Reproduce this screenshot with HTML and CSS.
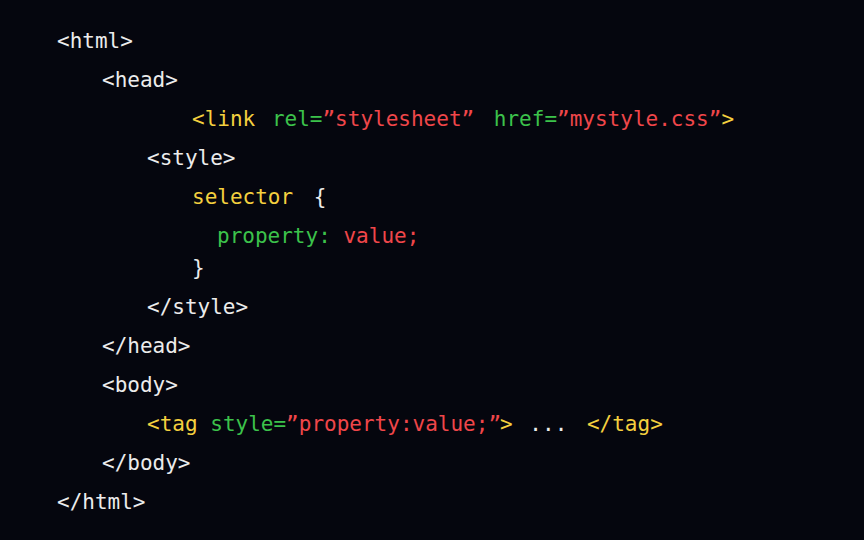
FILE: index.html
```html
<!DOCTYPE html>
<html>
<head>
<meta charset="utf-8">
<link rel="stylesheet" href="styles.css">
</head>
<body>
<div class="code">
  <div class="line"><span class="w">&lt;html&gt;</span></div>
  <div class="line i1"><span class="w">&lt;head&gt;</span></div>
  <div class="line i3"><span class="y">&lt;link</span> <span class="g sp4">rel=</span><span class="r">”stylesheet”</span> <span class="g sp7">href=</span><span class="r">”mystyle.css”</span><span class="y">&gt;</span></div>
  <div class="line i2"><span class="w">&lt;style&gt;</span></div>
  <div class="line i3"><span class="y">selector</span> <span class="w brace sp8">{</span></div>
  <div class="line i3p"><span class="g">property:</span> <span class="r">value;</span></div>
  <div class="line i3 close"><span class="w brace">}</span></div>
  <div class="line i2"><span class="w">&lt;/style&gt;</span></div>
  <div class="line i1"><span class="w">&lt;/head&gt;</span></div>
  <div class="line i1"><span class="w">&lt;body&gt;</span></div>
  <div class="line i2"><span class="y">&lt;tag</span> <span class="g">style=</span><span class="r">”property:value;”</span><span class="y nm2">&gt;</span> <span class="w sp4">...</span> <span class="y sp7">&lt;/tag&gt;</span></div>
  <div class="line i1"><span class="w">&lt;/body&gt;</span></div>
  <div class="line"><span class="w">&lt;/html&gt;</span></div>
</div>
</body>
</html>
```
FILE: styles.css
```css
html, body {
  margin: 0;
  padding: 0;
  background: #05060e;
}
body {
  width: 864px;
  height: 540px;
  overflow: hidden;
}
.code {
  padding: 22px 0 0 57px;
  font-family: "DejaVu Sans Mono", monospace;
  font-size: 21px;
}
.line {
  display: block;
  height: 39px;
  line-height: 39px;
  white-space: pre;
}
.line span { display: inline-block; }
.i1 { padding-left: 45px; }
.i2 { padding-left: 90px; }
.i3 { padding-left: 135px; }
.i3p { padding-left: 160px; }
.close { margin-top: -7px; }
.w { color: #ececec; }
.y { color: #f4d03f; }
.g { color: #3cc24b; }
.r { color: #f0464a; }
.nm2 { margin-left: -1px; }
.sp4 { margin-left: 4px; }
.sp7 { margin-left: 7px; }
.sp8 { margin-left: 8px; }
.brace { font-weight: normal; }
```
